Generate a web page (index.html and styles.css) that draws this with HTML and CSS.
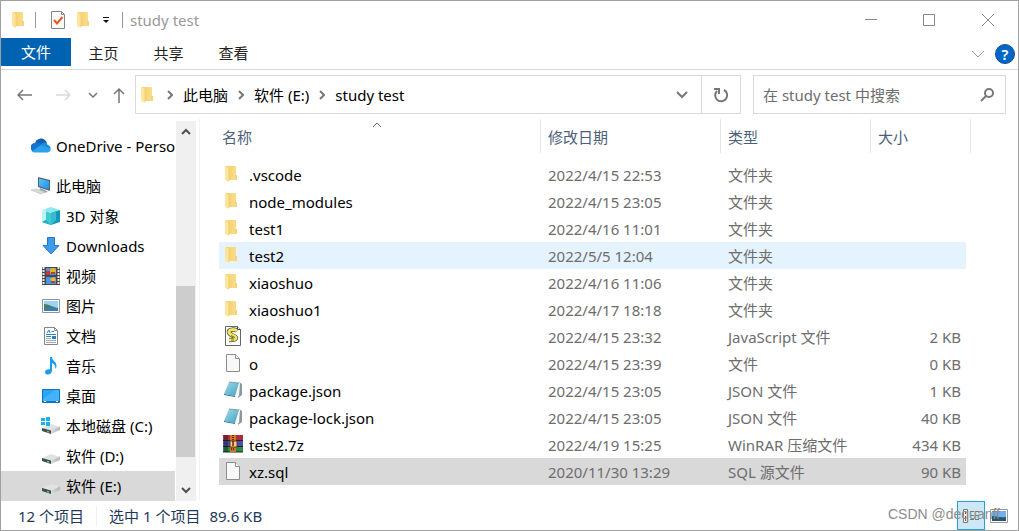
FILE: index.html
```html
<!DOCTYPE html>
<html lang="zh-CN">
<head>
<meta charset="utf-8">
<title>study test</title>
<link rel="stylesheet" href="styles.css">
</head>
<body>
<svg class="defs" aria-hidden="true">
  <defs>
    <linearGradient id="gFolder" x1="0" x2="1"><stop offset="0" stop-color="#f3cf6f"/><stop offset="1" stop-color="#fbdf8a"/></linearGradient>
    <linearGradient id="gBlue" x1="0" x2="1" y2="1"><stop offset="0" stop-color="#5ac4ff"/><stop offset="1" stop-color="#1e90e8"/></linearGradient>
    <linearGradient id="gNote" x1="0" x2="1" y2="1"><stop offset="0" stop-color="#a9dcec"/><stop offset="1" stop-color="#3f9fbf"/></linearGradient>
    <linearGradient id="gDrive" x1="0" x2="1"><stop offset="0" stop-color="#d8dadc"/><stop offset="1" stop-color="#b4b7ba"/></linearGradient>
  </defs>
  <symbol id="folder" viewBox="0 0 20 20">
    <path d="M3 2h10v9h1v5H3z" fill="url(#gFolder)"/><path d="M12 11h2v5h-2z" fill="#f5d37a"/>
    <path d="M2 2l4 2v14l-4-2z" fill="#fde5a0"/><path d="M6 4v13" stroke="#eec565" stroke-width=".7"/>
  </symbol>
  <symbol id="blank" viewBox="0 0 20 20">
    <path d="M3.500 1.500h9l4 4v13h-13z" fill="#f8f8f8" stroke="#8c8c8c"/><path d="M12.500 1.500v4h4" fill="#fff" stroke="#8c8c8c"/>
  </symbol>
  <symbol id="json" viewBox="0 0 20 20">
    <path d="M16 2l3 2v11l-4 3z" fill="#8b979c"/><path d="M15 2l2 1-1 13-3 1z" fill="#f5f8f9"/>
    <path d="M6 2l10 1-4 13-11-2z" fill="url(#gNote)"/><path d="M1 14l11 2v1L1 15z" fill="#2c7892"/><path d="M6 2l10 1" stroke="#6d8f9b" stroke-width=".8"/>
  </symbol>
  <symbol id="js" viewBox="0 0 20 20">
    <path d="M2.500.500h12l3 3v16h-15z" fill="#fff" stroke="#666"/><path d="M14.500.500v3h3" fill="#eee" stroke="#444"/>
    <path d="M14 5c-2-2-8-2-8 1 0 4 7 3 7 6 0 2-4 2-7 2" fill="none" stroke="#55531f" stroke-width="4.500"/>
    <path d="M14 5c-2-2-8-2-8 1 0 4 7 3 7 6 0 2-4 2-7 2" fill="none" stroke="#f1e56b" stroke-width="3"/>
    <path d="M8 5.500h4M8 9.500l4 2M8 14h3" stroke="#77742f"/>
  </symbol>
  <symbol id="rar" viewBox="0 0 20 20">
    <path d="M0 1h20v5H0z" fill="#b22a3c"/><path d="M0 7h20v5H0z" fill="#4a4fb5"/><path d="M0 13h20v5H0z" fill="#2d8a42"/>
    <path d="M0 6.500h20M0 12.500h20M0 18h20" stroke="#26201d"/><path d="M2 1v17M4 1v17" stroke="#17151d" stroke-width=".8"/>
    <path d="M7 1h6v17H7z" fill="#c9772b"/><path d="M7 7h7v6H7z" fill="#f2d49a" stroke="#6b3710"/><path d="M10 1v7M8 15h4" stroke="#61300e" stroke-dasharray="1 1" stroke-width="2"/><path d="M10 8v4" stroke="#a54620" stroke-width="2"/>
  </symbol>
  <symbol id="onedrive" viewBox="0 0 20 20">
    <path d="M4 9a6 6 0 0 1 12-1l-7 6z" fill="#0f5fb5"/><path d="M4 7c3-1 6 0 9 3l-5 6H4a4.500 4.500 0 0 1 0-9z" fill="#1374d0"/>
    <path d="M10 9c3-4 6-2 6.500 0 4 1 4.500 7 0 7.500H4c-1.500 0-2.500-.5-3-1.500z" fill="#2aa2ec"/><path d="M10 9c3-4 6-2 6.500 0 1.500.3 3 1.500 3 3.500z" fill="#1b8adf"/>
  </symbol>
  <symbol id="pc" viewBox="0 0 20 20">
    <path d="M7 1l12 3v11L7 11z" fill="#52636e"/><path d="M8 2.500l10 2.500v8.500L8 10z" fill="url(#gBlue)"/><path d="M9 12l5 2 3 2-5 1-4-2z" fill="#9aa2a8"/>
    <path d="M0 14l6-1 8 3-4 2z" fill="#d7dcdf" stroke="#b6bcc0" stroke-width=".6"/>
  </symbol>
  <symbol id="cube" viewBox="0 0 20 20">
    <path d="M1 4l9-3 9 3-9 3z" fill="#8de9ee"/><path d="M1 4l9 3v12l-9-3z" fill="#43c9d3"/><path d="M19 4l-9 3v12l9-3z" fill="#1396b7"/><path d="M1 4l4-1v11l-4 2z" fill="#bff3f4"/><path d="M5 14l5 5-9-3z" fill="#24aebd"/><path d="M10 7l5-2v9l-5 5z" fill="#35bccc"/>
  </symbol>
  <symbol id="down" viewBox="0 0 20 20"><path d="M6.500 1.500h7v8h4.500L10 18 2 9.500h4.500z" fill="#3c9cea" stroke="#2679c6"/></symbol>
  <symbol id="video" viewBox="0 0 20 20">
    <path d="M1 1h18v18H1z" fill="#4a4746"/><path d="M2.500 1v18M17.500 1v18" stroke="#e9e9e9" stroke-width="2" stroke-dasharray="2 1"/><path d="M5 2h10v7H5zM5 11h10v7H5z" fill="#4d94e8"/>
    <circle cx="12" cy="5" r="3" fill="#e7b61d"/><path d="M5 5h4v4H5z" fill="#c03b31"/><path d="M9 13l4-2 2 3-3 3z" fill="#e7bd27"/><path d="M10 7h4M10 16h4" stroke="#c03b31" stroke-width="2"/>
  </symbol>
  <symbol id="image" viewBox="0 0 20 20">
    <path d="M1.500 3.500h17v13h-17z" fill="#fff" stroke="#929292"/><path d="M3 5h14v10H3z" fill="#9bd2f5"/><path d="M3 8c5 0 8 3 14 4v3H3z" fill="#477f66"/><path d="M3 13c5-2 9-1 14-1v3H3z" fill="#3c7daf"/>
  </symbol>
  <symbol id="doc" viewBox="0 0 20 20">
    <path d="M3.500 1.500h10l3 3v14h-13z" fill="#fff" stroke="#858585"/><path d="M13.500 1.500v3h3" fill="none" stroke="#858585"/><path d="M6 7l2-3 1 3M10.500 5.500h2.500M5 8.500h10M5 10.500h5" stroke="#2486cf" fill="none"/><path d="M5 12.500h5M5 14.500h10M5 16.500h10" stroke="#a9a9a9"/><path d="M11 10h4v3h-4z" fill="#297fbe"/>
  </symbol>
  <symbol id="music" viewBox="0 0 20 20"><path d="M9 1h2c0 4 4.500 4 4.500 9 0 1-.5 2-1 3 0-3-1-5-3.500-6v8c0 4-7 5-7 1 0-2 2.500-3 5-2.500z" fill="#1b9bf2"/></symbol>
  <symbol id="desktop" viewBox="0 0 20 20"><path d="M1.500 3.500h17v13h-17z" fill="#27a6fa" stroke="#1273b8"/><path d="M2 13L14 4h4v11H2z" fill="#45b3fb"/><path d="M2 15.500h16" stroke="#1273b8"/><path d="M3 15.500h2M15 15.500h2" stroke="#fff"/></symbol>
  <symbol id="drive" viewBox="0 0 20 20">
    <path d="M1 12l9-4 9 3-8 4z" fill="#e0e2e4"/><path d="M1 12l9 2.500V18l-9-3z" fill="#444b4d"/><path d="M10 14.500l9-4V14l-9 4z" fill="url(#gDrive)"/><path d="M6 15.500l2 .5" stroke="#41e052" stroke-width="1.500"/>
  </symbol>
  <symbol id="windrive" viewBox="0 0 20 20">
    <use href="#drive"/><path d="M0 2h4v3H0zM5 1h4v4H5zM0 6h4v3H0zM5 6h4v4H5z" fill="#16b4ef"/>
  </symbol>
</svg>

<div class="window">
  <header class="titlebar">
    <svg class="icon"><use href="#folder"/></svg>
    <span class="bar"></span>
    <button class="quick" aria-label="属性"><svg class="icon" viewBox="0 0 20 20"><path d="M3.500 1.500h10l3 3v14h-13z" fill="#fafafa" stroke="#858585"/><path d="M13.500 1.500v3h3" fill="none" stroke="#858585"/><path d="M6 10l3 3.500L14.500 7" fill="none" stroke="#e8571c" stroke-width="2"/></svg></button>
    <button class="quick" aria-label="新建文件夹"><svg class="icon"><use href="#folder"/></svg></button>
    <button class="quick" aria-label="自定义快速访问工具栏"><svg width="8" height="8" viewBox="0 0 8 8"><path d="M1 1.500h6" stroke="#111"/><path d="M1 4h6L4 7z" fill="#111"/></svg></button>
    <span class="bar tight"></span>
    <h1 class="title">study test</h1>
    <div class="controls">
      <button aria-label="最小化"><svg viewBox="0 0 14 14"><path d="M1 6.500h12"/></svg></button>
      <button aria-label="最大化"><svg viewBox="0 0 14 14"><path d="M1.500 1.500h11v11h-11z"/></svg></button>
      <button aria-label="关闭"><svg viewBox="0 0 14 14"><path d="M1 1l12 12M13 1L1 13"/></svg></button>
    </div>
  </header>

  <nav class="ribbon">
    <button class="tab file">文件</button>
    <button class="tab">主页</button>
    <button class="tab">共享</button>
    <button class="tab">查看</button>
    <div class="ribbon-end">
      <button aria-label="展开功能区"><svg width="14" height="8" viewBox="0 0 14 8" fill="none" stroke="#999"><path d="M1 1l6 6 6-6"/></svg></button>
      <button class="help" aria-label="帮助">?</button>
    </div>
  </nav>

  <div class="address-row">
    <div class="arrows">
      <button aria-label="后退"><svg width="16" height="14" viewBox="0 0 16 14" fill="none" stroke="#777" stroke-width="1.500"><path d="M15 7H1M6 2L1 7l5 5"/></svg></button>
      <button aria-label="前进"><svg width="16" height="14" viewBox="0 0 16 14" fill="none" stroke="#d9d9d9" stroke-width="1.500"><path d="M1 7h14M10 2l5 5-5 5"/></svg></button>
      <button class="recent" aria-label="最近位置"><svg width="10" height="6" viewBox="0 0 10 6" fill="none" stroke="#777" stroke-width="1.500"><path d="M1 1l4 4 4-4"/></svg></button>
      <button class="up" aria-label="上移"><svg width="12" height="16" viewBox="0 0 12 16" fill="none" stroke="#777" stroke-width="1.500"><path d="M6 16V2M1 7l5-5 5 5"/></svg></button>
    </div>
    <div class="address">
      <svg class="icon"><use href="#folder"/></svg>
      <svg class="chev" viewBox="0 0 6 10"><path d="M1 1l4 4-4 4"/></svg>
      <button class="crumb">此电脑</button>
      <svg class="chev" viewBox="0 0 6 10"><path d="M1 1l4 4-4 4"/></svg>
      <button class="crumb">软件 (E:)</button>
      <svg class="chev" viewBox="0 0 6 10"><path d="M1 1l4 4-4 4"/></svg>
      <button class="crumb">study test</button>
      <button class="drop" aria-label="以前的位置"><svg width="12" height="8" viewBox="0 0 12 8" fill="none" stroke="#777" stroke-width="2"><path d="M1 1l5 5 5-5"/></svg></button>
      <button class="refresh" aria-label="刷新"><svg width="16" height="16" viewBox="0 0 16 16" fill="none" stroke="#777" stroke-width="2"><path d="M11 3a6 6 0 1 1-7 1"/><path d="M1 2h5v5"/></svg></button>
    </div>
    <label class="search">
      <input type="text" placeholder="在 study test 中搜索" aria-label="搜索">
      <svg width="14" height="14" viewBox="0 0 14 14" fill="none" stroke="#777" stroke-width="2"><circle cx="9" cy="5" r="4"/><path d="M6 8l-5 5"/></svg>
    </label>
  </div>

  <main class="body">
    <aside class="tree">
      <a class="node root" href="#"><svg class="icon"><use href="#onedrive"/></svg>OneDrive - Personal</a>
      <a class="node root pc" href="#"><svg class="icon"><use href="#pc"/></svg>此电脑</a>
      <a class="node" href="#"><svg class="icon"><use href="#cube"/></svg>3D 对象</a>
      <a class="node" href="#"><svg class="icon"><use href="#down"/></svg>Downloads</a>
      <a class="node" href="#"><svg class="icon"><use href="#video"/></svg>视频</a>
      <a class="node" href="#"><svg class="icon"><use href="#image"/></svg>图片</a>
      <a class="node" href="#"><svg class="icon"><use href="#doc"/></svg>文档</a>
      <a class="node" href="#"><svg class="icon"><use href="#music"/></svg>音乐</a>
      <a class="node" href="#"><svg class="icon"><use href="#desktop"/></svg>桌面</a>
      <a class="node" href="#"><svg class="icon"><use href="#windrive"/></svg>本地磁盘 (C:)</a>
      <a class="node" href="#"><svg class="icon"><use href="#drive"/></svg>软件 (D:)</a>
      <a class="node current" href="#"><svg class="icon"><use href="#drive"/></svg>软件 (E:)</a>
    </aside>
    <div class="scrollbar">
      <button aria-label="向上滚动"><svg width="10" height="8" viewBox="0 0 10 8" fill="none" stroke="#505050" stroke-width="2"><path d="M1 6l4-4 4 4"/></svg></button>
      <div class="track"><div class="thumb"></div></div>
      <button aria-label="向下滚动"><svg width="10" height="8" viewBox="0 0 10 8" fill="none" stroke="#505050" stroke-width="2"><path d="M1 2l4 4 4-4"/></svg></button>
    </div>
    <section class="list">
      <table class="files">
        <colgroup><col class="c-name"><col class="c-date"><col class="c-type"><col class="c-size"></colgroup>
        <thead>
          <tr><th><svg class="sort" viewBox="0 0 10 6"><path d="M1 5l4-4 4 4"/></svg>名称</th><th>修改日期</th><th>类型</th><th>大小</th></tr>
        </thead>
        <tbody>
          <tr><td><div class="name"><svg class="icon"><use href="#folder"/></svg>.vscode</div></td><td>2022/4/15 22:53</td><td>文件夹</td><td></td></tr>
          <tr><td><div class="name"><svg class="icon"><use href="#folder"/></svg>node_modules</div></td><td>2022/4/15 23:05</td><td>文件夹</td><td></td></tr>
          <tr><td><div class="name"><svg class="icon"><use href="#folder"/></svg>test1</div></td><td>2022/4/16 11:01</td><td>文件夹</td><td></td></tr>
          <tr class="hover"><td><div class="name"><svg class="icon"><use href="#folder"/></svg>test2</div></td><td>2022/5/5 12:04</td><td>文件夹</td><td></td></tr>
          <tr><td><div class="name"><svg class="icon"><use href="#folder"/></svg>xiaoshuo</div></td><td>2022/4/16 11:06</td><td>文件夹</td><td></td></tr>
          <tr><td><div class="name"><svg class="icon"><use href="#folder"/></svg>xiaoshuo1</div></td><td>2022/4/17 18:18</td><td>文件夹</td><td></td></tr>
          <tr><td><div class="name"><svg class="icon"><use href="#js"/></svg>node.js</div></td><td>2022/4/15 23:32</td><td>JavaScript 文件</td><td>2 KB</td></tr>
          <tr><td><div class="name"><svg class="icon"><use href="#blank"/></svg>o</div></td><td>2022/4/15 23:39</td><td>文件</td><td>0 KB</td></tr>
          <tr><td><div class="name"><svg class="icon"><use href="#json"/></svg>package.json</div></td><td>2022/4/15 23:05</td><td>JSON 文件</td><td>1 KB</td></tr>
          <tr><td><div class="name"><svg class="icon"><use href="#json"/></svg>package-lock.json</div></td><td>2022/4/15 23:05</td><td>JSON 文件</td><td>40 KB</td></tr>
          <tr><td><div class="name"><svg class="icon"><use href="#rar"/></svg>test2.7z</div></td><td>2022/4/19 15:25</td><td>WinRAR 压缩文件</td><td>434 KB</td></tr>
          <tr class="selected"><td><div class="name"><svg class="icon"><use href="#blank"/></svg>xz.sql</div></td><td>2020/11/30 13:29</td><td>SQL 源文件</td><td>90 KB</td></tr>
        </tbody>
      </table>
    </section>
  </main>

  <footer class="status">
    <span class="count">12 个项目</span>
    <span class="chosen">选中 1 个项目</span>
    <span>89.6 KB</span>
    <div class="views">
      <button class="view on" aria-label="详细信息"><svg width="18" height="16" viewBox="0 0 18 16" fill="none" stroke="#777"><path d="M1.500 1.500h4v13h-4z" fill="#fff"/><path d="M3.500 3v3M3.500 8v5" stroke="#a44"/><path d="M8 3.500h4M13 3.500h4M8 7.500h4M13 7.500h4M8 11.500h4M13 11.500h4"/></svg></button>
      <button class="view" aria-label="大缩略图"><svg width="18" height="14" viewBox="0 0 18 14"><path d="M.500.500h17v13H.500z" fill="#fff" stroke="#999"/><path d="M2 2h14v10H2z" fill="#6fb0ee"/><path d="M2 7c5 0 8 2 14 1v4H2z" fill="#28566e"/></svg></button>
    </div>
  </footer>
  <div class="watermark">CSDN @dequanff</div>
</div>
</body>
</html>
```
FILE: styles.css
```css
* { box-sizing: border-box; }
html, body { height: 100%; }
body {
  margin: 0;
  font: 15px/20px "Noto Sans", "Noto Sans CJK SC", sans-serif;
  color: #000;
}
button {
  display: flex; align-items: center; justify-content: center;
  margin: 0; padding: 0; border: 0; background: none;
  font: inherit; color: inherit;
}
a { color: inherit; text-decoration: none; }
svg { flex: none; }
.defs { position: absolute; width: 0; height: 0; }
.icon { width: 20px; height: 20px; display: block; }

.window {
  position: relative;
  display: flex; flex-direction: column;
  min-height: 100%;
  border: 1px solid #a0a0a0;
  background: #fff;
}

.titlebar { display: flex; align-items: center; height: 37px; padding-left: 9px; }
.bar { width: 1px; height: 16px; margin: 0 12px 0 5px; background: #999; }
.bar.tight { margin: 0 7px 0 12px; }
.quick + .quick { margin-left: 7px; }
.title { margin: 0; font-size: 15px; line-height: 20px; font-weight: 400; color: #999; }
.controls { display: flex; margin-left: auto; }
.controls button { width: 58px; height: 37px; }
.controls svg { width: 14px; height: 14px; fill: none; stroke: #888; }
.controls button:last-child { width: 60px; }

.ribbon { display: flex; height: 32px; border-bottom: 1px solid #dadbdc; }
.tab { width: 65px; height: 30px; color: #222; }
.tab.file { width: 70px; height: 28px; background: #0063b1; color: #fff; }
.ribbon-end { display: flex; align-items: center; gap: 10px; margin-left: auto; padding-right: 3px; }
.help { width: 20px; height: 20px; border: 1px solid #164f87; border-radius: 50%; background: #0067c9; color: #fff; font-weight: 600; }

.address-row { display: flex; align-items: center; height: 49px; padding-right: 12px; }
.arrows { display: flex; align-items: center; gap: 22px; width: 134px; padding-left: 16px; }
.arrows .recent { margin-left: -5px; }
.arrows .up { margin-left: -7px; }
.address { display: flex; align-items: center; flex: 1; height: 39px; border: 1px solid #d9d9d9; padding-left: 3px; }
.address > .icon { margin-right: 8px; }
.chev { width: 6px; height: 10px; margin: 0 10px; fill: none; stroke: #777; stroke-width: 2; }
.address > .icon + .chev { margin-left: 0; }
.drop { width: 38px; height: 37px; margin-left: auto; }
.refresh { width: 39px; height: 37px; border-left: 1px solid #d9d9d9; }
.search { display: flex; align-items: center; width: 253px; height: 39px; margin-left: 12px; padding: 0 11px 0 9px; border: 1px solid #d9d9d9; }
.search input { flex: 1; min-width: 0; padding: 0; border: 0; background: none; font: inherit; }
.search input::placeholder { color: #6d6d6d; opacity: 1; }

.body { display: flex; flex: 1; }
.tree { width: 174px; padding-top: 12px; overflow: hidden; }
.node { display: flex; align-items: center; gap: 5px; height: 30px; padding-left: 40px; white-space: nowrap; }
.node.root { padding-left: 30px; }
.node.pc { margin-top: 10px; }
.node.current { background: #d9d9d9; }
.scrollbar { display: flex; flex-direction: column; width: 20px; margin: 2px 3px 0 1px; background: #f0f0f0; }
.scrollbar button { height: 22px; }
.track { display: flex; flex: 1; align-items: flex-end; }
.thumb { width: 19px; height: 51%; margin-bottom: 22px; background: #cdcdcd; }

.list { flex: 1; padding-left: 19px; border-left: 1px solid #f3f3f3; }
.files { border-collapse: separate; border-spacing: 0; table-layout: fixed; width: 752px; color: #6d6d6d; }
.c-name { width: 322px; }
.c-date { width: 180px; }
.c-type { width: 150px; }
.c-size { width: 100px; }
.files th { position: relative; height: 34px; padding: 2px 0 0 7px; border-right: 1px solid #e5e5e5; font-weight: 400; text-align: left; color: #4c607a; }
.files th:first-child { padding-left: 3px; }
.sort { position: absolute; top: 3px; left: 153px; width: 10px; height: 6px; fill: none; stroke: #666; }
.files tbody::before { content: ""; display: block; height: 8px; }
.files td { height: 27px; padding: 0 0 0 7px; }
.files td:first-child { padding-left: 4px; color: #000; }
.files td:last-child { padding-right: 5px; border-right: 5px solid #fff; text-align: right; }
.name { display: flex; align-items: center; gap: 6px; }
.name .icon { margin-bottom: 2px; }
.hover td { background: #e5f3ff; }
.selected td { background: #d9d9d9; }

.status { display: flex; align-items: center; height: 29px; padding-left: 17px; color: #1e395b; }
.count { margin-right: 12px; padding-right: 12px; border-right: 1px solid #f0f0f0; }
.chosen { margin-right: 9px; }
.views { display: flex; margin-left: auto; padding-right: 5px; }
.view { width: 28px; height: 29px; }
.view.on { border: 1px solid #26a0da; background: #cce8f6; }
.watermark { position: absolute; right: 18px; bottom: 6px; font: 14px/20px "Liberation Sans", sans-serif; color: #8c8c8c; }
```
